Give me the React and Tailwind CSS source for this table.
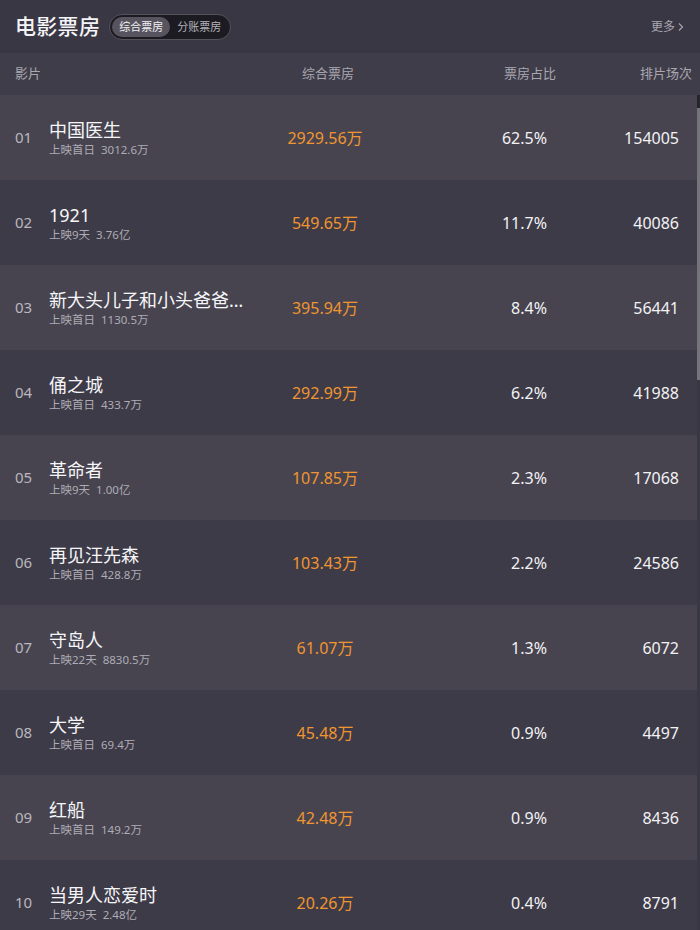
import { useState } from "react";

const movies = [
  { rank: "01", name: "中国医生", release: "上映首日", sum: "3012.6万", box: "2929.56万", rate: "62.5%", shows: "154005" },
  { rank: "02", name: "1921", release: "上映9天", sum: "3.76亿", box: "549.65万", rate: "11.7%", shows: "40086" },
  { rank: "03", name: "新大头儿子和小头爸爸4：完美爸爸", release: "上映首日", sum: "1130.5万", box: "395.94万", rate: "8.4%", shows: "56441" },
  { rank: "04", name: "俑之城", release: "上映首日", sum: "433.7万", box: "292.99万", rate: "6.2%", shows: "41988" },
  { rank: "05", name: "革命者", release: "上映9天", sum: "1.00亿", box: "107.85万", rate: "2.3%", shows: "17068" },
  { rank: "06", name: "再见汪先森", release: "上映首日", sum: "428.8万", box: "103.43万", rate: "2.2%", shows: "24586" },
  { rank: "07", name: "守岛人", release: "上映22天", sum: "8830.5万", box: "61.07万", rate: "1.3%", shows: "6072" },
  { rank: "08", name: "大学", release: "上映首日", sum: "69.4万", box: "45.48万", rate: "0.9%", shows: "4497" },
  { rank: "09", name: "红船", release: "上映首日", sum: "149.2万", box: "42.48万", rate: "0.9%", shows: "8436" },
  { rank: "10", name: "当男人恋爱时", release: "上映29天", sum: "2.48亿", box: "20.26万", rate: "0.4%", shows: "8791" },
];

const font = { fontFamily: '"Noto Sans", "Noto Sans CJK SC", sans-serif' };

const App = () => {
  const [tab, setTab] = useState(0);

  return (
    <div className="w-[700px] h-[930px] overflow-hidden bg-[#3a3744] text-white" style={font}>
      {/* Header */}
      <header className="h-[53px] flex items-center px-[15px]">
        <h1 className="text-[21px] font-medium text-[#f4f4f6] tracking-[0.3px]">电影票房</h1>
        <div className="ml-[9px] flex items-center h-[26px] p-[2px] rounded-full bg-[#1d1b22] border border-[#55525e]">
          {["综合票房", "分账票房"].map((t, i) => (
            <button
              key={t}
              onClick={() => setTab(i)}
              className={`h-full px-[7px] rounded-full text-[11px] leading-none ${
                tab === i ? "bg-[#57545f] text-[#f0f0f2]" : "text-[#b3b1b8]"
              }`}
            >
              {t}
            </button>
          ))}
        </div>
        <div className="ml-auto flex items-center gap-[2px] text-[12px] text-[#a9a7b0]">
          <span>更多</span>
          <svg width="8" height="10" viewBox="0 0 8 10" fill="none">
            <path d="M2 1.5L5.5 5L2 8.5" stroke="#a9a7b0" strokeWidth="1.1" />
          </svg>
        </div>
      </header>

      {/* Column titles */}
      <div className="h-[42px] flex items-center bg-[#403d4a] text-[13px] text-[#a9a7b0]">
        <div className="pl-[15px] w-[254px]">影片</div>
        <div className="w-[148px] text-center">综合票房</div>
        <div className="w-[154px] text-right">票房占比</div>
        <div className="w-[136px] text-right">排片场次</div>
      </div>

      {/* List */}
      <div className="flex">
        <div className="w-[697px]">
          {movies.map((m, i) => (
            <div
              key={m.rank}
              className={`h-[85px] flex items-center ${i % 2 === 0 ? "bg-[#474450]" : "bg-[#3e3b48]"}`}
            >
              <div className="pl-[15px] w-[49px] text-[15px] text-[#b9b7bf]">{m.rank}</div>
              <div className="w-[205px] flex flex-col">
                <div className="w-[198px] truncate text-[18px] leading-[24px] text-[#f6f6f8]">{m.name}</div>
                <div className="text-[11.5px] leading-[15px] text-[#aeacb4]">
                  {m.release}
                  <span className="ml-[6px]">{m.sum}</span>
                </div>
              </div>
              <div className="w-[142px] text-center text-[16px] text-[#f0952f]">{m.box}</div>
              <div className="w-[151px] text-right text-[16px] text-[#f2f2f4]">{m.rate}</div>
              <div className="w-[132px] text-right text-[16px] text-[#f2f2f4]">{m.shows}</div>
            </div>
          ))}
        </div>
        {/* scrollbar */}
        <div className="w-[3px] flex flex-col">
          <div className="h-[13px] bg-[#26242c]" />
          <div className="h-[272px] bg-[#75737c]" />
        </div>
      </div>
    </div>
  );
};

export default App;
